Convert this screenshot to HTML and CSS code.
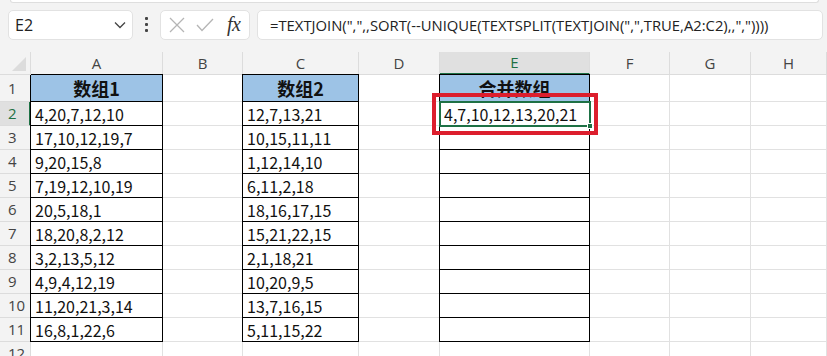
FILE: index.html
```html
<!DOCTYPE html>
<html>
<head>
<meta charset="utf-8">
<link rel="stylesheet" href="styles.css">
</head>
<body>
<div class="app">
  <div class="ribbon-edge"></div>
  <div class="fbar">
    <div class="namebox">
      <span class="ref">E2</span>
      <svg class="chev" width="12" height="8" viewBox="0 0 12 8"><path d="M1 1.5 L6 6.5 L11 1.5" fill="none" stroke="#444" stroke-width="1.3"/></svg>
    </div>
    <div class="dots"><i></i><i></i><i></i></div>
    <div class="fxgroup">
      <svg width="16" height="16" viewBox="0 0 16 16"><path d="M1 1 L15 15 M15 1 L1 15" stroke="#b5b5b5" stroke-width="1.3" fill="none"/></svg>
      <svg width="18" height="14" viewBox="0 0 18 14"><path d="M1 7 L6 12.5 L17 1" stroke="#b5b5b5" stroke-width="1.3" fill="none"/></svg>
      <span class="fx">fx</span>
    </div>
    <div class="formula">=TEXTJOIN(",",,SORT(--UNIQUE(TEXTSPLIT(TEXTJOIN(",",TRUE,A2:C2),,","))))</div>
  </div>
  <div class="sheet">
    <div class="grid">
      <div class="ch corner"><span class="tri"></span></div>
      <div class="ch">A</div><div class="ch">B</div><div class="ch">C</div><div class="ch">D</div><div class="ch sel">E</div><div class="ch">F</div><div class="ch">G</div><div class="ch">H</div>

      <div class="rh">1</div>
      <div class="c b hd lft top">数组1</div><div class="c"></div>
      <div class="c b hd lft top">数组2</div><div class="c"></div>
      <div class="c b hd lft top">合并数组</div><div class="c"></div><div class="c"></div><div class="c"></div>

      <div class="rh rsel">2</div>
      <div class="c b lft">4,20,7,12,10</div><div class="c"></div>
      <div class="c b lft">12,7,13,21</div><div class="c"></div>
      <div class="c b lft">4,7,10,12,13,20,21</div><div class="c"></div><div class="c"></div><div class="c"></div>

      <div class="rh">3</div>
      <div class="c b lft">17,10,12,19,7</div><div class="c"></div>
      <div class="c b lft">10,15,11,11</div><div class="c"></div>
      <div class="c b lft"></div><div class="c"></div><div class="c"></div><div class="c"></div>

      <div class="rh">4</div>
      <div class="c b lft">9,20,15,8</div><div class="c"></div>
      <div class="c b lft">1,12,14,10</div><div class="c"></div>
      <div class="c b lft"></div><div class="c"></div><div class="c"></div><div class="c"></div>

      <div class="rh">5</div>
      <div class="c b lft">7,19,12,10,19</div><div class="c"></div>
      <div class="c b lft">6,11,2,18</div><div class="c"></div>
      <div class="c b lft"></div><div class="c"></div><div class="c"></div><div class="c"></div>

      <div class="rh">6</div>
      <div class="c b lft">20,5,18,1</div><div class="c"></div>
      <div class="c b lft">18,16,17,15</div><div class="c"></div>
      <div class="c b lft"></div><div class="c"></div><div class="c"></div><div class="c"></div>

      <div class="rh">7</div>
      <div class="c b lft">18,20,8,2,12</div><div class="c"></div>
      <div class="c b lft">15,21,22,15</div><div class="c"></div>
      <div class="c b lft"></div><div class="c"></div><div class="c"></div><div class="c"></div>

      <div class="rh">8</div>
      <div class="c b lft">3,2,13,5,12</div><div class="c"></div>
      <div class="c b lft">2,1,18,21</div><div class="c"></div>
      <div class="c b lft"></div><div class="c"></div><div class="c"></div><div class="c"></div>

      <div class="rh">9</div>
      <div class="c b lft">4,9,4,12,19</div><div class="c"></div>
      <div class="c b lft">10,20,9,5</div><div class="c"></div>
      <div class="c b lft"></div><div class="c"></div><div class="c"></div><div class="c"></div>

      <div class="rh">10</div>
      <div class="c b lft">11,20,21,3,14</div><div class="c"></div>
      <div class="c b lft">13,7,16,15</div><div class="c"></div>
      <div class="c b lft"></div><div class="c"></div><div class="c"></div><div class="c"></div>

      <div class="rh">11</div>
      <div class="c b lft">16,8,1,22,6</div><div class="c"></div>
      <div class="c b lft">5,11,15,22</div><div class="c"></div>
      <div class="c b lft"></div><div class="c"></div><div class="c"></div><div class="c"></div>

      <div class="rh">12</div>
      <div class="c"></div><div class="c"></div><div class="c"></div><div class="c"></div><div class="c"></div><div class="c"></div><div class="c"></div><div class="c"></div>
    </div>
    <div class="selbox"><span class="handle"></span></div>
    <div class="redbox"></div>
  </div>
</div>
</body>
</html>
```
FILE: styles.css
```css
* { box-sizing: border-box; }
html, body { margin: 0; padding: 0; background: #fff; }
body { width: 827px; height: 356px; overflow: hidden; font-family: "Noto Sans CJK SC", "Noto Sans", sans-serif; }
.app { width: 827px; height: 356px; overflow: hidden; background: #f3f3f3; }

.ribbon-edge {
  height: 3px; margin: 0 8px 0 10px;
  background: #fff; border: 1px solid #dedede; border-top: none;
  border-radius: 0 0 5px 5px;
}
.fbar { display: flex; align-items: center; height: 49px; padding: 0 4px 6px 8px; }
.namebox {
  width: 125px; height: 30px; background: #fff; border: 1px solid #e2e2e2; border-radius: 5px;
  display: flex; align-items: center; justify-content: space-between; padding: 0 6px 0 6px;
}
.ref { font-family: "Open Sans", sans-serif; font-size: 16px; color: #222; }
.chev { margin-top: 1px; }
.dots { width: 27px; display: flex; flex-direction: column; align-items: center; gap: 3px; }
.dots i { display: block; width: 3px; height: 3px; background: #444; border-radius: 1px; }
.fxgroup {
  width: 90px; height: 30px; background: #fff; border: 1px solid #e2e2e2; border-radius: 5px;
  display: flex; align-items: center; padding: 0 5px 0 8px; gap: 11px;
}
.fx { font-family: "Liberation Serif", serif; font-style: italic; font-size: 20px; color: #333; margin-left: 2px; letter-spacing: -0.5px; }
.formula {
  flex: 1; margin-left: 7px; height: 30px; background: #fff; border: 1px solid #e2e2e2; border-radius: 5px;
  display: flex; align-items: center; padding-left: 12px;
  font-family: "Open Sans", sans-serif; font-size: 14.8px; color: #222; white-space: nowrap; overflow: hidden;
}

.sheet { position: relative; }
.grid {
  display: grid;
  grid-template-columns: 31px 132px 80px 116px 81px 150px 80px 81px 76px;
  grid-template-rows: 23px 27px repeat(11, 24px);
}
.ch {
  background: #f3f3f3; border-right: 1px solid #dcdcdc; border-bottom: 1px solid #dcdcdc;
  font-family: "Open Sans", sans-serif; font-size: 15px; color: #444;
  display: flex; align-items: center; justify-content: center; line-height: 1;
}
.ch.sel { background: #e0e0e0; color: #1e7145; border-bottom: 2px solid #1e7145; }
.corner { position: relative; background: #f3f3f3; }
.tri {
  position: absolute; right: 4px; bottom: 3px; width: 0; height: 0;
  border-left: 14px solid transparent; border-bottom: 14px solid #dcdcdc;
}
.rh {
  background: #f3f3f3; border-right: 1px solid #dcdcdc; border-bottom: 1px solid #dcdcdc;
  font-family: "Open Sans", sans-serif; font-size: 15px; color: #444;
  display: flex; align-items: center; padding-left: 8px; line-height: 1;
}
.rh.rsel { color: #1e7145; background: #e0e0e0; border-right: 2px solid #1e7145; }
.c {
  background: #fff; border-right: 1px solid #e1e1e1; border-bottom: 1px solid #e1e1e1;
  font-size: 16px; color: #111; display: flex; align-items: center; padding-left: 4px;
  white-space: nowrap; line-height: 1;
}
.c.b { border-right: 1px solid #000; border-bottom: 1px solid #000; }
.c.lft { box-shadow: -1px 0 0 #000; }
.c.top { box-shadow: -1px 0 0 #000, 0 -1px 0 #000, -1px -1px 0 #000; }
.c.hd { background: #9dc3e6; font-weight: 700; font-size: 18px; justify-content: center; padding-left: 0; }

.selbox {
  position: absolute; left: 439px; top: 49px; width: 152px; height: 26px;
  border: 2px solid #1e7145;
}
.handle { position: absolute; right: -4px; bottom: -4px; width: 6px; height: 6px; background: #1e7145; border: 1px solid #fff; }
.redbox {
  position: absolute; left: 432px; top: 41px; width: 166px; height: 42px;
  border: 4px solid #dc1e2d;
}
```
